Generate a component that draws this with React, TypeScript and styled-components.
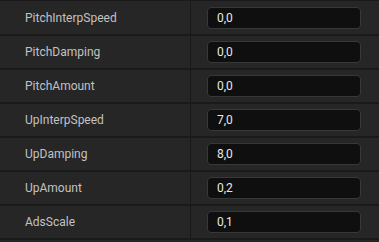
import React from "react";
import styled, { createGlobalStyle } from "styled-components";

const Global = createGlobalStyle`
  html, body { margin: 0; padding: 0; background: #262626; }
  body { font-family: Roboto, "Open Sans", sans-serif; }
`;

const Panel = styled.div`
  width: 379px;
  height: 242px;
  background: #262626;
  overflow: hidden;
  border-top: 1px solid #1a1a1a;
  box-sizing: border-box;
`;

const Row = styled.div<{ $first?: boolean }>`
  display: grid;
  grid-template-columns: 190px 1px 1fr;
  height: ${(p) => (p.$first ? 35 : 34)}px;
  border-bottom: 2px solid #1a1a1a;
  box-sizing: border-box;
`;

const Label = styled.div`
  display: flex;
  align-items: center;
  padding-left: 25px;
  font-size: 12px;
  color: #c2c2c2;
  background: #262626;
`;

const Divider = styled.div`
  background: #1a1a1a;
`;

const ValueCell = styled.div`
  display: flex;
  align-items: center;
  padding: 0 18px 0 16px;
  background: #262626;
`;

const Input = styled.div`
  flex: 1;
  height: 22px;
  box-sizing: border-box;
  border: 1px solid #383838;
  border-radius: 4px;
  background: #0f0f0f;
  color: #e8e8e8;
  font-size: 12px;
  display: flex;
  align-items: center;
  padding-left: 9px;
`;

const rows: [string, string][] = [
  ["PitchInterpSpeed", "0,0"],
  ["PitchDamping", "0,0"],
  ["PitchAmount", "0,0"],
  ["UpInterpSpeed", "7,0"],
  ["UpDamping", "8,0"],
  ["UpAmount", "0,2"],
  ["AdsScale", "0,1"],
];

export default function App() {
  return (
    <>
      <Global />
      <Panel>
        {rows.map(([l, v], i) => (
          <Row key={l} $first={i === 0}>
            <Label>{l}</Label>
            <Divider />
            <ValueCell>
              <Input>{v}</Input>
            </ValueCell>
          </Row>
        ))}
      </Panel>
    </>
  );
}
